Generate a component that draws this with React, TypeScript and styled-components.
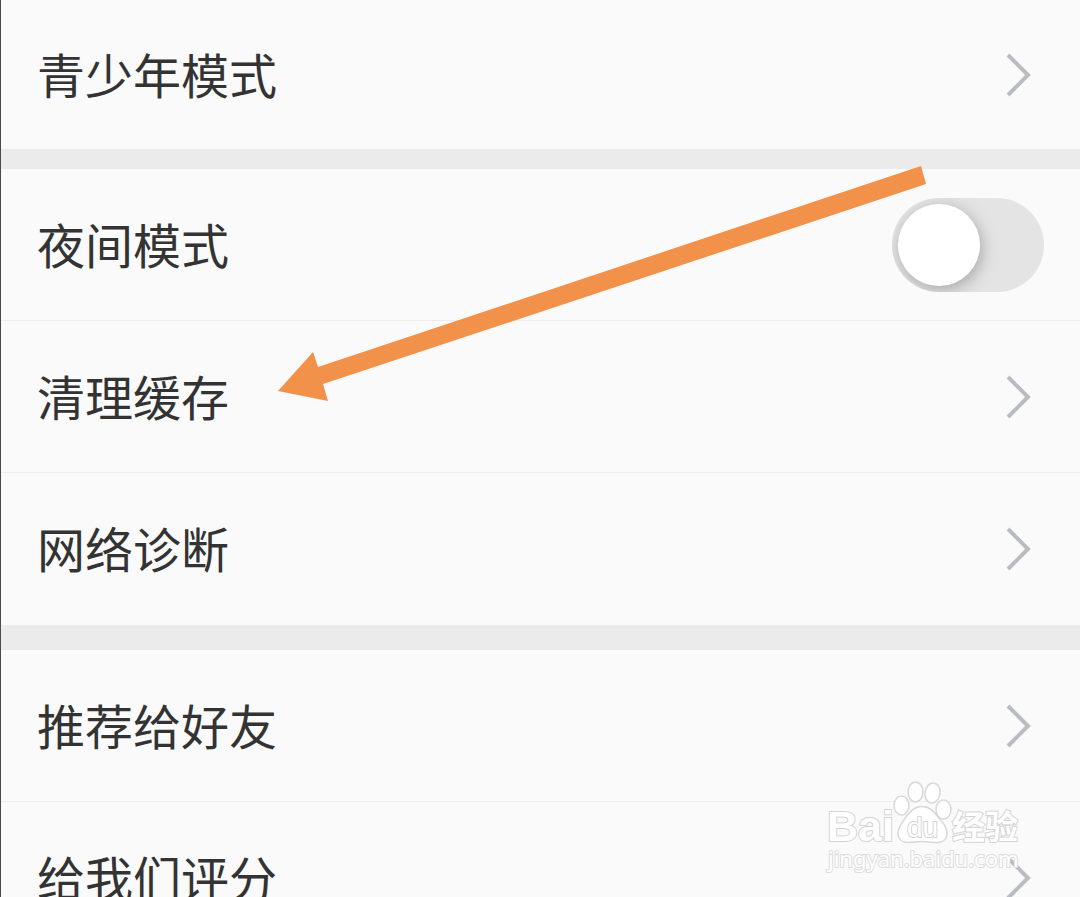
import React, { useState } from "react";
import styled, { createGlobalStyle } from "styled-components";

const GlobalStyle = createGlobalStyle`
  *, *::before, *::after { box-sizing: border-box; }
  body {
    margin: 0;
    background: #fafafa;
    color: #333;
    font-family: "Noto Sans CJK SC", "Liberation Sans", sans-serif;
  }
`;

const Screen = styled.main`
  position: relative;
  height: 100vh;
  overflow: hidden;
  border-left: 1px solid #4a4a4c;
  background: #fafafa;
`;

const Group = styled.section<{ $gap?: number }>`
  border-top: ${(p) => p.$gap ?? 0}px solid #ebebeb;
`;

const Row = styled.div<{ $short?: boolean }>`
  height: ${(p) => (p.$short ? 149 : 152)}px;

  &:not(:last-child) {
    border-bottom: 1px solid #ededed;
  }
`;

const RowLink = styled.a`
  display: flex;
  align-items: center;
  justify-content: space-between;
  height: 100%;
  padding: 0 48px 0 36px;
  color: inherit;
  text-decoration: none;
`;

const RowLabel = styled.label`
  display: flex;
  align-items: center;
  justify-content: space-between;
  height: 100%;
  padding: 0 36px;
  cursor: pointer;
`;

const Title = styled.span`
  padding-bottom: 4px;
  font-size: 48px;
  line-height: 72px;
  white-space: nowrap;
`;

const Switch = styled.input`
  appearance: none;
  flex: none;
  width: 152px;
  height: 94px;
  margin: 0;
  padding: 6px;
  border-radius: 47px;
  background: #e4e4e4;
  overflow: hidden;
  cursor: pointer;

  &::before {
    content: "";
    display: block;
    width: 82px;
    height: 82px;
    border-radius: 50%;
    background: #fff;
    box-shadow: 2px 4px 16px rgba(60, 60, 70, 0.36);
  }

  &:checked {
    background: #f0914a;
  }

  &:checked::before {
    margin-left: auto;
  }
`;

const ChevronIcon = styled.svg`
  flex: none;
  width: 26px;
  height: 44px;
`;

const Pointer = styled.svg`
  position: absolute;
  top: 166px;
  left: 276px;
  width: 650px;
  height: 236px;
  pointer-events: none;
`;

const Watermark = styled.svg`
  position: absolute;
  top: 778px;
  right: 54px;
  width: 204px;
  height: 100px;
  pointer-events: none;
`;

function Chevron() {
  return (
    <ChevronIcon viewBox="0 0 26 44" aria-hidden="true">
      <path d="M2 2 L22 22 L2 42" fill="none" stroke="#b9bcc2" strokeWidth="4" />
    </ChevronIcon>
  );
}

function LinkRow({ title, short }: { title: string; short?: boolean }) {
  return (
    <Row $short={short}>
      <RowLink href="#">
        <Title>{title}</Title>
        <Chevron />
      </RowLink>
    </Row>
  );
}

export default function App() {
  const [night, setNight] = useState(false);

  return (
    <>
      <GlobalStyle />
      <Screen>
        <Group>
          <LinkRow title="青少年模式" short />
        </Group>
        <Group $gap={20}>
          <Row>
            <RowLabel>
              <Title>夜间模式</Title>
              <Switch
                type="checkbox"
                checked={night}
                onChange={(e) => setNight(e.target.checked)}
              />
            </RowLabel>
          </Row>
          <LinkRow title="清理缓存" />
          <LinkRow title="网络诊断" />
        </Group>
        <Group $gap={25}>
          <LinkRow title="推荐给好友" />
          <LinkRow title="给我们评分" />
        </Group>

        <Pointer viewBox="277 166 650 236" aria-hidden="true">
          <path
            d="M278 391 L313 352 L318 367 L921 166 L926 184 L323 384 L328 401 Z"
            fill="#f1914a"
          />
        </Pointer>

        <Watermark viewBox="822 778 204 100" role="img" aria-label="Baidu 经验">
          <g fill="#fff" stroke="#d8d8d8" strokeWidth="1.5">
            <ellipse cx="901.5" cy="805.5" rx="7.5" ry="9.5" />
            <ellipse cx="915.5" cy="792" rx="7.5" ry="10" />
            <ellipse cx="932.5" cy="793" rx="7.5" ry="10" transform="rotate(10 932.5 793)" />
            <ellipse cx="943.5" cy="809.5" rx="7.5" ry="9.5" />
            <path d="M922 806.5 C930 806.5 934 812 938 817 C943 823 947 827 947 833 C947 839 943 842.5 937 842.5 C931 842.5 927 841.5 922 841.5 C917 841.5 913 842.5 908 842.5 C902 842.5 898 839 898 833 C898 827 902 823 906 817 C910 812 914 806.5 922 806.5 Z" />
          </g>
          <g fill="#fff" stroke="#d4d4d4" strokeWidth="2" paintOrder="stroke">
            <text x="827" y="841" fontFamily="Liberation Sans, sans-serif" fontWeight="700" fontSize="43">
              Bai
            </text>
            <text x="907" y="837" fontFamily="Liberation Sans, sans-serif" fontWeight="400" fontSize="28">
              du
            </text>
            <text x="952" y="839" fontFamily="Noto Sans CJK SC, sans-serif" fontWeight="700" fontSize="33">
              经验
            </text>
            <text x="828" y="867" fontFamily="Noto Sans, sans-serif" fontSize="22" stroke="#dcdcdc">
              jingyan.baidu.com
            </text>
          </g>
        </Watermark>
      </Screen>
    </>
  );
}
